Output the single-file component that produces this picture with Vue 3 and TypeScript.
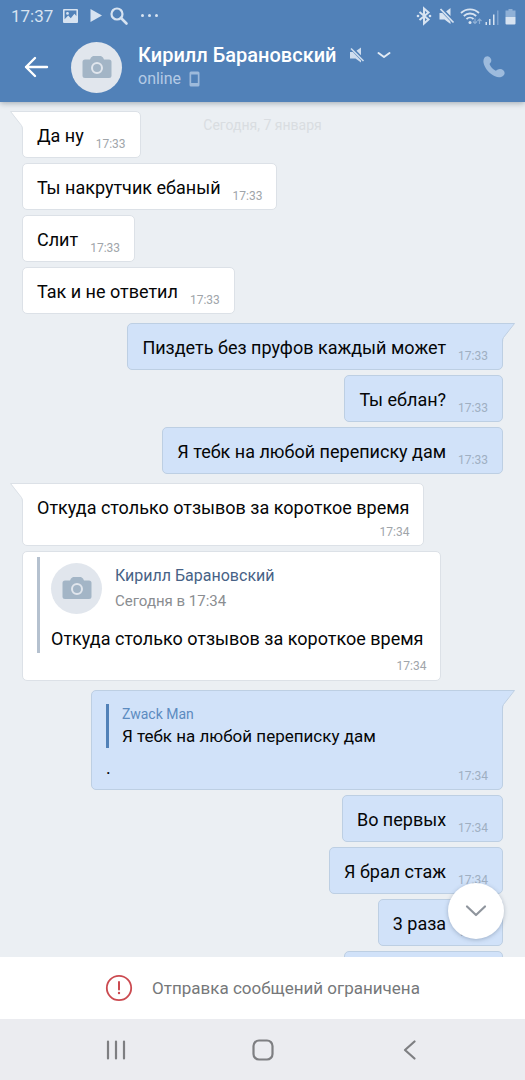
<script setup lang="ts">
interface Message {
  id: number
  text: string
  time: string
  kind?: 'plain' | 'stacked' | 'forward' | 'reply' | 'cut'
  author?: string
  date?: string
  quote?: string
}

interface Group {
  id: number
  side: 'in' | 'out'
  messages: Message[]
}

const contact = 'Кирилл Барановский'

const groups: Group[] = [
  {
    id: 1,
    side: 'in',
    messages: [
      { id: 1, text: 'Да ну', time: '17:33' },
      { id: 2, text: 'Ты накрутчик ебаный', time: '17:33' },
      { id: 3, text: 'Слит', time: '17:33' },
      { id: 4, text: 'Так и не ответил', time: '17:33' },
    ],
  },
  {
    id: 2,
    side: 'out',
    messages: [
      { id: 5, text: 'Пиздеть без пруфов каждый может', time: '17:33' },
      { id: 6, text: 'Ты еблан?', time: '17:33' },
      { id: 7, text: 'Я тебк на любой переписку дам', time: '17:33' },
    ],
  },
  {
    id: 3,
    side: 'in',
    messages: [
      { id: 8, kind: 'stacked', text: 'Откуда столько отзывов за короткое время', time: '17:34' },
      {
        id: 9,
        kind: 'forward',
        author: contact,
        date: 'Сегодня в 17:34',
        text: 'Откуда столько отзывов за короткое время',
        time: '17:34',
      },
    ],
  },
  {
    id: 4,
    side: 'out',
    messages: [
      {
        id: 10,
        kind: 'reply',
        author: 'Zwack Man',
        quote: 'Я тебк на любой переписку дам',
        text: '.',
        time: '17:34',
      },
      { id: 11, text: 'Во первых', time: '17:34' },
      { id: 12, text: 'Я брал стаж', time: '17:34' },
      { id: 13, text: '3 раза', time: '17:34' },
      { id: 14, kind: 'cut', text: '', time: '' },
    ],
  },
]
</script>

<template>
  <div class="screen">
    <header class="header">
      <div class="status">
        <span class="clock">17:37</span>
        <svg class="status-left" width="104" height="20" viewBox="0 0 104 20" aria-hidden="true">
          <path fill="#d7e3f1" fill-rule="evenodd" d="M2 3h13a1 1 0 0 1 1 1v12a1 1 0 0 1-1 1H2a1 1 0 0 1-1-1V4a1 1 0 0 1 1-1zm.6 1.600v8.600l3.600-3.600 2.600 2.600 3.600-4.400 2 2.200V4.600zM5.500 6a1.400 1.400 0 1 1 0 2.800 1.400 1.400 0 0 1 0-2.800z" />
          <path fill="#d7e3f1" d="M28.500 3l11.500 6.500L28.500 16z" />
          <circle cx="55" cy="8" r="5.500" fill="none" stroke="#d7e3f1" stroke-width="2.200" />
          <path d="M59 12l5.500 5.500" stroke="#d7e3f1" stroke-width="2.600" stroke-linecap="round" />
          <g fill="#d7e3f1"><circle cx="80.500" cy="9.500" r="1.500" /><circle cx="87.500" cy="9.500" r="1.500" /><circle cx="94.500" cy="9.500" r="1.500" /></g>
        </svg>
        <svg class="status-right" width="100" height="20" viewBox="0 0 100 20" aria-hidden="true">
          <path d="M3.500 6l9 7.500L8 17.500v-15l4.500 4-9 7.500" fill="none" stroke="#d7e3f1" stroke-width="2" />
          <g fill="#d7e3f1"><circle cx="2" cy="10" r="1.300" /><circle cx="14" cy="10" r="1.300" /></g>
          <path fill="#d7e3f1" d="M23.500 7h4.500l6.500 6.500v4.500L28.500 13.500h-5zM30 5.500L34.500 2v8z" />
          <path d="M25 3l12.500 13" stroke="#5181b8" stroke-width="3.500" />
          <path d="M24.500 3l13 13.500" stroke="#d7e3f1" stroke-width="1.800" />
          <g fill="none" stroke="#d7e3f1" stroke-width="1.800">
            <path d="M45 7a13 13 0 0 1 18 0" /><path d="M47.800 10a9 9 0 0 1 12.400 0" /><path d="M50.500 13a5 5 0 0 1 7 0" />
          </g>
          <circle cx="54" cy="16.500" r="1.500" fill="#d7e3f1" />
          <path d="M59 12.500v5m-2-2l2 2 2-2M63.500 18v-5m-2 2l2-2 2 2" fill="none" stroke="#8fb0d6" stroke-width="1.200" />
          <g fill="#d7e3f1"><path d="M69.500 16H71v3h-1.500zM73 13h1.500v6H73zM77 8.500h1.500V19H77z" /><path fill="#7ca1ce" d="M81 4.500h1.500V19H81z" /></g>
          <path fill="#8fb0d6" d="M92.500 3h4v1.500h3V11H89.500V4.500h3z" />
          <path fill="#d7e3f1" d="M89.500 11h10v6.500a1 1 0 0 1-1 1h-8a1 1 0 0 1-1-1z" />
        </svg>
      </div>
      <div class="toolbar">
        <button class="icon-button back" type="button" aria-label="Назад">
          <svg width="26" height="24" viewBox="0 0 26 24">
            <path d="M12 3L3 12l9 9M3 12h21" fill="none" stroke="#fff" stroke-width="2.400" stroke-linecap="round" stroke-linejoin="round" />
          </svg>
        </button>
        <span class="avatar">
          <svg width="30" height="24" viewBox="0 0 30 24">
            <path fill="#a3b5c6" d="M9 2.500L11 1h8l2 1.500 1 2h5a2.500 2.500 0 0 1 2.500 2.500v13.500A2.500 2.500 0 0 1 27 23H3a2.500 2.500 0 0 1-2.500-2.500V7A2.500 2.500 0 0 1 3 4.500h5z" />
            <circle cx="15" cy="13" r="5" fill="#a3b5c6" stroke="#e1e6ed" stroke-width="2" />
          </svg>
        </span>
        <div class="contact">
          <h1 class="name">
            {{ contact }}
            <svg width="16" height="16" viewBox="0 0 16 16" aria-hidden="true">
              <path fill="#cfddee" d="M1 5h4.500L12 11v4.500L6.500 11.500H1zM7 4l5-3.500V9z" />
              <path d="M2.500 1l12 12.500" stroke="#5181b8" stroke-width="3.500" />
              <path d="M2 1.500l12.500 12.500" stroke="#cfddee" stroke-width="1.600" />
            </svg>
            <svg class="chevron" width="14" height="8" viewBox="0 0 14 8" aria-hidden="true">
              <path d="M1.500 2L7 6l5.500-4" fill="none" stroke="#e2ebf5" stroke-width="2" stroke-linecap="round" stroke-linejoin="round" />
            </svg>
          </h1>
          <p class="presence">
            online
            <svg width="11" height="16" viewBox="0 0 11 16" aria-hidden="true">
              <path fill="#9dbadb" fill-rule="evenodd" d="M2 .5h7A1.500 1.500 0 0 1 10.500 2v12A1.500 1.500 0 0 1 9 15.500H2A1.500 1.500 0 0 1 .5 14V2A1.500 1.500 0 0 1 2 .5zM2.200 3.500v8.500h6.600V3.500z" />
            </svg>
          </p>
        </div>
        <button class="icon-button call" type="button" aria-label="Позвонить">
          <svg width="24" height="24" viewBox="0 0 24 24">
            <path fill="#9dbbdd" d="M2 3.500C3 1.500 5.500.5 7.500 2c1.800 1.500 2.300 3.300 1.500 5L7.500 9c1 2.800 3.500 5.500 6.300 6.800l2-1.300c2-1 4-.5 5.500.7 2 1.700 1.700 4.300-.3 5.800-2 1.500-4.800 1.800-8 .3C7.500 18.800 3.700 14.500 2 9.500c-.8-2.300-.8-4.300 0-6z" />
          </svg>
        </button>
      </div>
    </header>

    <main class="chat">
      <time class="day">Сегодня, 7 января</time>
      <section v-for="group in groups" :key="group.id" class="group" :class="group.side">
        <article
          v-for="(message, index) in group.messages"
          :key="message.id"
          class="bubble"
          :class="message.kind ?? 'plain'"
        >
          <svg v-if="index === 0" class="tail" width="15" height="19" viewBox="0 0 15 19" aria-hidden="true">
            <path class="tail-fill" d="M15 0H1.500l11 14.500q1.500 2 1.500 4.500h1z" />
            <path class="tail-line" d="M15 .5H1.500l11 14q1 1.500 1 4.500" />
          </svg>
          <div v-if="message.kind === 'forward'" class="forwarded">
            <div class="source">
              <span class="avatar">
                <svg width="30" height="24" viewBox="0 0 30 24">
                  <path fill="#a3b5c6" d="M9 2.500L11 1h8l2 1.500 1 2h5a2.500 2.500 0 0 1 2.500 2.500v13.500A2.500 2.500 0 0 1 27 23H3a2.500 2.500 0 0 1-2.500-2.500V7A2.500 2.500 0 0 1 3 4.500h5z" />
                  <circle cx="15" cy="13" r="5" fill="#a3b5c6" stroke="#e1e6ed" stroke-width="2" />
                </svg>
              </span>
              <div>
                <p class="source-name">{{ message.author }}</p>
                <p class="source-date">{{ message.date }}</p>
              </div>
            </div>
            <p class="text">{{ message.text }}</p>
          </div>
          <blockquote v-if="message.kind === 'reply'" class="quote">
            <p class="quote-author">{{ message.author }}</p>
            <p class="quote-text">{{ message.quote }}</p>
          </blockquote>
          <div v-if="message.kind !== 'cut'" class="line">
            <p v-if="message.kind !== 'forward'" class="text">{{ message.text }}</p>
            <time class="time">{{ message.time }}</time>
          </div>
        </article>
      </section>
      <button class="scroll-down" type="button" aria-label="Вниз">
        <svg width="22" height="14" viewBox="0 0 22 14">
          <path d="M2 2.500l9 8.500 9-8.500" fill="none" stroke="#8f959d" stroke-width="2.200" stroke-linecap="round" stroke-linejoin="round" />
        </svg>
      </button>
    </main>

    <footer class="notice">
      <svg width="28" height="28" viewBox="0 0 28 28" aria-hidden="true">
        <circle cx="14" cy="14" r="12.200" fill="none" stroke="#cb4a50" stroke-width="1.800" />
        <path d="M14 8v7.500" stroke="#cb4a50" stroke-width="2" stroke-linecap="round" />
        <circle cx="14" cy="19" r="1.200" fill="#cb4a50" />
      </svg>
      <p>Отправка сообщений ограничена</p>
    </footer>

    <nav class="system-nav">
      <button type="button" aria-label="Недавние">
        <svg width="20" height="20" viewBox="0 0 20 20"><path d="M2 1.500v17M10 1.500v17M18 1.500v17" stroke="#7e7f82" stroke-width="2.200" stroke-linecap="round" /></svg>
      </button>
      <button type="button" aria-label="Главный экран">
        <svg width="22" height="22" viewBox="0 0 22 22"><rect x="1.500" y="1.500" width="19" height="19" rx="5.500" fill="none" stroke="#7e7f82" stroke-width="2.200" /></svg>
      </button>
      <button type="button" aria-label="Назад">
        <svg width="14" height="20" viewBox="0 0 14 20"><path d="M11.500 1.500L2 10l9.500 8.500" fill="none" stroke="#7e7f82" stroke-width="2.200" stroke-linecap="round" stroke-linejoin="round" /></svg>
      </button>
    </nav>
  </div>
</template>

<style>
body {
  margin: 0;
}
</style>

<style scoped>
.screen {
  display: flex;
  flex-direction: column;
  height: 100vh;
  overflow: hidden;
  background: #ebeff3;
  color: #050607;
  font-family: Roboto, 'Noto Sans', sans-serif;
}

p,
h1,
blockquote {
  margin: 0;
}

svg {
  display: block;
  flex: none;
}

button {
  display: flex;
  align-items: center;
  justify-content: center;
  padding: 0;
  border: 0;
  background: none;
}

.header {
  position: relative;
  z-index: 2;
  flex: none;
  background: #5181b8;
  box-shadow: 0 1px 6px rgba(60, 75, 90, 0.45);
}

.status {
  display: flex;
  align-items: center;
  height: 32px;
  padding: 0 9px 0 11px;
}

.clock {
  color: #d7e3f1;
  font-size: 17px;
  line-height: 20px;
}

.status-left {
  margin-left: 9px;
}

.status-right {
  margin-left: auto;
}

.toolbar {
  display: flex;
  align-items: center;
  height: 70px;
  padding: 0 18px 0 23px;
}

.icon-button {
  width: 26px;
  height: 48px;
}

.avatar {
  display: flex;
  flex: none;
  align-items: center;
  justify-content: center;
  width: 51px;
  height: 51px;
  border-radius: 50%;
  background: #e1e6ed;
}

.toolbar .avatar {
  margin-left: 22px;
}

.contact {
  flex: 1;
  min-width: 0;
  margin-left: 16px;
}

.name {
  display: flex;
  align-items: center;
  gap: 12px;
  color: #fff;
  font-size: 20px;
  font-weight: 500;
  line-height: 24px;
  white-space: nowrap;
}

.presence {
  display: flex;
  align-items: center;
  gap: 8px;
  color: #b4cae5;
  font-size: 16px;
  line-height: 24px;
}

.chat {
  position: relative;
  flex: 1;
  min-height: 0;
  overflow: hidden;
  padding: 9px 22px 0;
}

.day {
  position: absolute;
  top: 14px;
  left: 0;
  right: 0;
  color: #d9dde1;
  font-size: 14px;
  line-height: 18px;
  text-align: center;
}

.group {
  display: flex;
  flex-direction: column;
  gap: 5px;
  margin-bottom: 9px;
}

.in {
  align-items: flex-start;
}

.out {
  align-items: flex-end;
}

.bubble {
  position: relative;
  box-sizing: border-box;
  padding: 10px 14px 7px;
  border: 1px solid #dce1e7;
  border-radius: 5px;
  background: #fff;
}

.out .bubble {
  border-color: #bdcfe3;
  background: #d1e2f9;
}

.tail {
  position: absolute;
  top: -1px;
  left: -14px;
}

.out .tail {
  left: auto;
  right: -14px;
  transform: scaleX(-1);
}

.tail-fill {
  fill: #fff;
}

.tail-line {
  fill: none;
  stroke: #dce1e7;
}

.out .tail-fill {
  fill: #d1e2f9;
}

.out .tail-line {
  stroke: #bdcfe3;
}

.in .bubble:first-child {
  border-top-left-radius: 0;
}

.out .bubble:first-child {
  border-top-right-radius: 0;
}

.line {
  display: flex;
  align-items: flex-end;
  justify-content: space-between;
  gap: 12px;
}

.text {
  font-size: 18px;
  line-height: 28px;
}

.time {
  color: #a0a5aa;
  font-size: 12px;
  line-height: 12px;
}

.out .time {
  color: #9fafc2;
}

.stacked .line {
  flex-direction: column;
  align-items: flex-end;
  gap: 4px;
}

.forward {
  padding-top: 5px;
  padding-bottom: 8px;
}

.forward .line {
  justify-content: flex-end;
  padding-top: 7px;
}

.forwarded {
  padding: 5px 3px 0 11px;
  border-left: 3px solid #b5c1cf;
}

.source {
  display: flex;
  align-items: center;
  gap: 13px;
  margin-bottom: 11px;
}

.source-name {
  color: #476286;
  font-size: 16px;
  line-height: 27px;
}

.source-date {
  color: #8a8d91;
  font-size: 15px;
  line-height: 25px;
}

.reply {
  width: 412px;
  max-width: 100%;
  padding-top: 13px;
}

.quote {
  padding-left: 13px;
  border-left: 3px solid #5181b8;
}

.quote-author {
  color: #5c8bc0;
  font-size: 14px;
  line-height: 20px;
}

.quote-text {
  font-size: 17px;
  line-height: 24px;
}

.reply .line {
  padding-top: 6px;
}

.cut {
  width: 33%;
  height: 48px;
}

.scroll-down {
  position: absolute;
  right: 21px;
  bottom: 18px;
  width: 56px;
  height: 56px;
  border-radius: 50%;
  background: #fff;
  box-shadow: 0 1px 4px rgba(60, 80, 110, 0.35);
}

.notice {
  display: flex;
  flex: none;
  align-items: center;
  justify-content: center;
  gap: 19px;
  height: 62px;
  background: #fff;
  color: #76787a;
  font-size: 17px;
  line-height: 24px;
}

.system-nav {
  display: grid;
  flex: none;
  grid-template-columns: repeat(3, 1fr);
  height: 61px;
  padding: 0 8%;
  background: #ebecf0;
}
</style>
